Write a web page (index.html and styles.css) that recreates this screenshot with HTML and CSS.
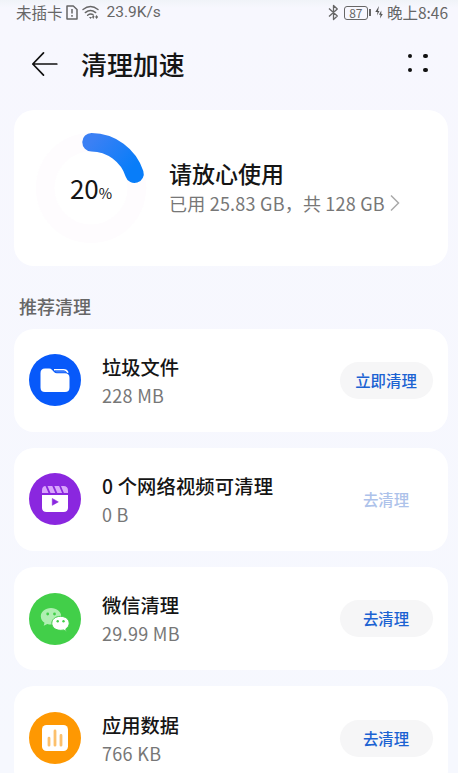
FILE: index.html
```html
<!DOCTYPE html>
<html lang="zh-CN">
<head>
<meta charset="utf-8">
<meta name="viewport" content="width=device-width, initial-scale=1">
<title>清理加速</title>
<link rel="stylesheet" href="styles.css">
</head>
<body>
<div class="screen">
  <div class="status">
    <span class="status-carrier">未插卡</span>
    <svg class="icon-sim" width="12" height="15" viewBox="0 0 12 15"><path d="M1 1h6.3L11 4.500V14H1z" fill="none" stroke="#666" stroke-width="1.500" stroke-linejoin="round"/><path d="M6 4v4.500M6 10v1.700" stroke="#666" stroke-width="1.500"/></svg>
    <svg class="icon-wifi" width="18" height="15" viewBox="0 0 18 15"><g fill="none" stroke="#666" stroke-width="1.400" stroke-linecap="round"><path d="M1 4.500Q8.500-1.500 16 4.500"/><path d="M3.300 7.600Q8.500 3.300 13.700 7.600"/><path d="M5.600 10.300Q8.500 8 11 9.700"/></g><path d="M7 12h3l-1.500 2zM11.300 10l1.200 1.600-1.200 2.400-1.300-2zM14.500 10l1.600 2-1.600 2-1.300-2z" fill="#666"/></svg>
    <span class="status-speed">23.9K/s</span>
    <svg class="icon-bt" width="11" height="17" viewBox="0 0 11 17"><path d="M1 4.500 9.300 12 5.500 15.500V1.500L9.300 5 1 12.500" fill="none" stroke="#666" stroke-width="1.300" stroke-linejoin="round"/></svg>
    <span class="battery">87</span>
    <span class="battery-tip"></span>
    <svg class="icon-bolt" width="8" height="13" viewBox="0 0 8 13"><path d="M4 0 .3 6h2.200L2 9.500 4.500 5H3zM6.300 4.500 4 8.700h1.500L5 12.500 7.800 8H6.300z" fill="#555"/></svg>
    <span class="status-time">晚上8:46</span>
  </div>

  <div class="header">
    <svg width="28" height="26" viewBox="0 0 28 26"><path d="M25.800 13H1.800M12.500 1.800 1.800 13 12.500 24.200" fill="none" stroke="#111" stroke-width="1.700" stroke-linecap="round" stroke-linejoin="round"/></svg>
    <h1 class="title">清理加速</h1>
    <div class="more"><i></i><i></i><i></i><i></i></div>
  </div>

  <div class="card summary">
    <div class="ring">
      <svg width="112" height="112" viewBox="-56 -56 112 112">
        <defs><linearGradient id="arc" gradientUnits="userSpaceOnUse" x1="0" y1="-46" x2="36" y2="-14"><stop offset="0" stop-color="#3b80f4"/><stop offset="1" stop-color="#087df9"/></linearGradient></defs>
        <circle r="45.800" fill="none" stroke="#fefcfe" stroke-width="18.500"/>
        <path d="M.5-45.800A45.800 45.800 0 0 1 43.500-14.200" fill="none" stroke="url(#arc)" stroke-width="18.500" stroke-linecap="round"/>
      </svg>
      <div class="percent"><span class="percent-num">20</span><span class="percent-sign">%</span></div>
    </div>
    <div class="summary-text">
      <div class="summary-title">请放心使用</div>
      <div class="summary-sub"><span>已用 25.83 GB，共 128 GB</span><svg width="10" height="18" viewBox="0 0 10 18"><path d="M1 1.500 8.500 9 1 16.500" fill="none" stroke="#aaa" stroke-width="1.500"/></svg></div>
    </div>
  </div>

  <h2 class="section">推荐清理</h2>

  <div class="list">
    <div class="card row">
      <svg class="badge" width="52" height="52" viewBox="0 0 52 52"><circle cx="26" cy="26" r="26" fill="#0759fa"/><path d="M11.500 19q0-4.500 4.500-4.500h4.200q1.600 0 2.700 1.200l2.400 2.500q1 1 2.500 1H36q4.500 0 4.500 4.500v9.800q0 4.500-4.500 4.500H16q-4.500 0-4.500-4.500z" fill="#fff"/><path d="M25 15.700H34.500q3.300 0 4.500 3" fill="none" stroke="#fff" stroke-width="1.500"/><path d="M25.500 16.500 27.500 18.400H37.500L35.500 16.500z" fill="#3d7dfc"/></svg>
      <div class="row-text"><div class="row-title">垃圾文件</div><div class="row-sub">228 MB</div></div>
      <div class="btn">立即清理</div>
    </div>
    <div class="card row">
      <svg class="badge" width="52" height="52" viewBox="0 0 52 52"><circle cx="26" cy="26" r="26" fill="#8a27df"/><path d="M13 22h26v12.500q0 4.500-4.500 4.500h-17q-4.500 0-4.500-4.500z" fill="#fff"/><path d="M13 20v-2.500q0-4.500 3.500-4.500L19.500 20zM18.500 13h4.800l3 7h-4.800zM25.300 13h4.800l3 7h-4.800zM32 13h2.500q4.500 0 4.500 4.500V20h-4.100z" fill="#d9a5fb"/><path d="M23.300 25.500v6.800l6-3.400z" fill="#8a27df" stroke="#8a27df" stroke-width=".6" stroke-linejoin="round"/></svg>
      <div class="row-text"><div class="row-title title-wide">0 个网络视频可清理</div><div class="row-sub">0 B</div></div>
      <div class="btn btn-off">去清理</div>
    </div>
    <div class="card row">
      <svg class="badge" width="52" height="52" viewBox="0 0 52 52"><circle cx="26" cy="26" r="26" fill="#42cf49"/><path d="M22 15c-5.800 0-10.200 3.700-10.200 8.300 0 2.700 1.400 4.900 3.700 6.400l-.8 3 3.600-1.800c1.200.4 2.400.5 3.700.5 5.800 0 10.200-3.500 10.200-8.100S27.800 15 22 15z" fill="#b0efb2"/><circle cx="18.700" cy="21" r="1.400" fill="#42cf49"/><circle cx="25.500" cy="21" r="1.400" fill="#42cf49"/><path d="M31.500 23.300c-5 0-8.700 3.100-8.700 7s3.700 7 8.700 7c1 0 2.100-.1 3-.4l3 1.500-.7-2.500c2.100-1.300 3.400-3.300 3.400-5.600 0-3.900-3.700-7-8.700-7z" fill="#fff" stroke="#42cf49" stroke-width="1"/><circle cx="28.700" cy="28.200" r="1.200" fill="#42cf49"/><circle cx="34.500" cy="28.200" r="1.200" fill="#42cf49"/></svg>
      <div class="row-text"><div class="row-title">微信清理</div><div class="row-sub">29.99 MB</div></div>
      <div class="btn">去清理</div>
    </div>
    <div class="card row">
      <svg class="badge" width="52" height="52" viewBox="0 0 52 52"><circle cx="26" cy="26" r="26" fill="#fe9802"/><rect x="13" y="13" width="26" height="26" rx="4.500" fill="#fff"/><g stroke="#fcc06c" stroke-width="2.800" stroke-linecap="round"><path d="M20 26.200v7M26 19v14.200M32 23.400v9.800"/></g></svg>
      <div class="row-text"><div class="row-title">应用数据</div><div class="row-sub">766 KB</div></div>
      <div class="btn">去清理</div>
    </div>
  </div>
</div>
</body>
</html>
```
FILE: styles.css
```css
* { box-sizing: border-box; }
html, body { margin: 0; height: 100%; overflow: hidden; }
body { font-family: "Noto Sans CJK SC", sans-serif; color: #151515; background: #f6f8fe; }
svg { display: block; flex: none; }
.screen { height: 773px; overflow: hidden; background: linear-gradient(#f0f3f8, #f7f7fe 8px, #f6f8fe); }

.status { display: flex; align-items: center; height: 25px; padding: 0 10px 0 16px; color: #666; font-size: 15.5px; line-height: 25px; white-space: nowrap; }
.icon-sim { margin-left: 3px; }
.icon-wifi { margin-left: 4px; }
.status-speed { margin-left: 7px; font-family: Roboto, sans-serif; font-size: 15.500px; }
.icon-bt { margin-left: auto; }
.battery { width: 24px; height: 14px; margin-left: 5px; border: 1.5px solid #666; border-radius: 3px; font-size: 12px; line-height: 11px; text-align: center; }
.battery-tip { width: 2px; height: 7px; margin-left: 1px; background: #666; }
.icon-bolt { margin-left: 4px; }
.status-time { margin-left: 4px; }

.header { display: flex; align-items: center; height: 77px; padding: 0 30.500px 0 31px; }
.title { margin: 0 0 0 22px; font-size: 25.900px; font-weight: 500; line-height: 38px; }
.more { display: grid; grid-template-columns: 4.600px 4.600px; gap: 9.500px 10.500px; margin-left: auto; margin-top: -1px; }
.more i { width: 4.600px; height: 4.600px; border-radius: 50%; background: #111; }

.card { display: flex; align-items: center; border-radius: 20px; background: #fff; }
.summary { height: 155.500px; margin: 8px 10px 0 14px; padding-left: 21px; }
.ring { display: grid; place-items: center; width: 112px; height: 112px; }
.ring > * { grid-area: 1 / 1; }
.percent { display: flex; align-items: baseline; padding-top: 5px; line-height: 36px; }
.percent-num { font-size: 26px; }
.percent-sign { font-size: 14.500px; }
.summary-text { margin-left: 22px; }
.summary-title { margin-top: -2px; font-size: 23px; font-weight: 500; line-height: 32px; }
.summary-sub { display: flex; align-items: center; gap: 5px; color: #777; font-size: 18px; letter-spacing: 0.22px; line-height: 28px; white-space: nowrap; }

.section { margin: 27px 0 10px 19px; color: #666; font-size: 18px; font-weight: 500; line-height: 26px; }
.list { display: flex; flex-direction: column; gap: 16px; padding: 0 10px 0 14px; }
.row { flex: none; height: 103.300px; padding: 0 15.500px 0 15px; }
.row-text { padding-top: 1px; margin-left: 21px; white-space: nowrap; }
.row-title { font-size: 19.300px; font-weight: 500; line-height: 28px; }
.title-wide { letter-spacing: 0.150px; }
.row-sub { color: #777; font-size: 18px; letter-spacing: 0.300px; line-height: 28px; }
.btn { width: 93px; height: 37px; margin-left: auto; border-radius: 19px; background: #f6f6f7; color: #1b62d2; font-size: 15.400px; font-weight: 500; line-height: 37px; text-align: center; }
.btn-off { background: none; color: #adc2ea; }
```
